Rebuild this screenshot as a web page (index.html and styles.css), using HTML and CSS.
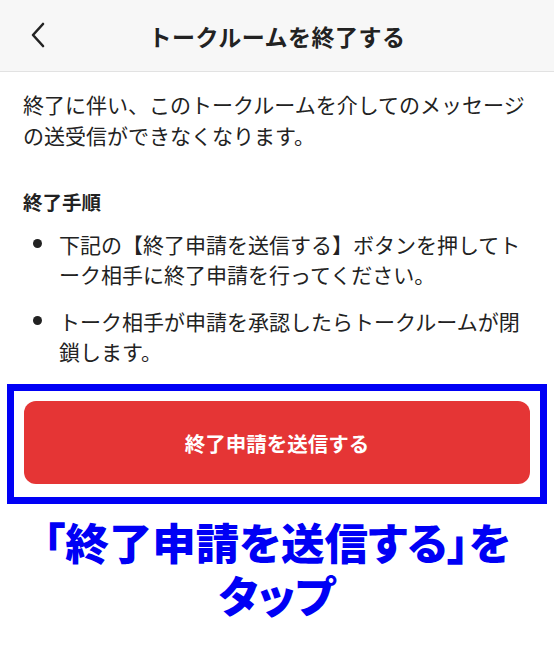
FILE: index.html
```html
<!DOCTYPE html>
<html lang="ja">
<head>
  <meta charset="UTF-8">
  <meta name="viewport" content="width=device-width, initial-scale=1">
  <title>トークルームを終了する</title>
  <link rel="stylesheet" href="styles.css">
</head>
<body>

  <header class="topbar">
    <button class="back" aria-label="戻る">
      <svg width="16" height="26" viewBox="0 0 16 26">
        <polyline points="13,2 3,13 13,24" fill="none" stroke="#222" stroke-width="2.6" stroke-linecap="round" stroke-linejoin="round"/>
      </svg>
    </button>
    <h1 class="title">トークルームを終了する</h1>
  </header>

  <main class="content">
    <p class="lead">終了に伴い、このトークルームを介してのメッセージの送受信ができなくなります。</p>

    <h2 class="steps-title">終了手順</h2>
    <ul class="steps">
      <li>下記の【終了申請を送信する】ボタンを押してトーク相手に終了申請を行ってください。</li>
      <li>トーク相手が申請を承認したらトークルームが閉鎖します。</li>
    </ul>
  </main>

  <div class="highlight">
    <button class="submit">終了申請を送信する</button>
  </div>

  <p class="caption">
    <span class="caption-line">「終了申請を送信する」を</span>
    <span class="caption-line">タップ</span>
  </p>

</body>
</html>
```

FILE: styles.css
```css
body {
  margin: 0;
  padding: 0;
  background-color: #fff;
  font-family: "Noto Sans CJK JP", "Noto Sans", sans-serif;
  color: #222;
  line-break: loose;
}

.topbar {
  height: 71px;
  background-color: #f7f7f7;
  border-bottom: 1px solid #e2e2e2;
  display: flex;
  align-items: center;
  justify-content: center;
  position: relative;
}

.back {
  position: absolute;
  left: 30px;
  top: 22px;
  padding: 0;
  border: none;
  background: none;
  line-height: 0;
}

.title {
  margin: 0;
  font-size: 23px;
  font-weight: 700;
  letter-spacing: 0.5px;
}

.content {
  padding: 0 20px 0 23px;
}

.lead {
  margin: 17px 0 0;
  font-size: 21px;
  line-height: 31px;
}

.steps-title {
  margin: 35px 0 0;
  font-size: 19.5px;
  font-weight: 700;
  line-height: 31px;
}

.steps {
  list-style: none;
  margin: 12px 0 0;
  padding: 0 0 0 36px;
}

.steps li {
  position: relative;
  font-size: 21px;
  line-height: 30px;
}

.steps li + li {
  margin-top: 17px;
}

.steps li:before {
  content: "";
  position: absolute;
  left: -26px;
  top: 10px;
  width: 9px;
  height: 9px;
  border-radius: 50%;
  background-color: #222;
}

.highlight {
  margin: 18px 7px 0;
  border: 7px solid #0000f5;
  padding: 10px 10px 13px;
}

.submit {
  display: block;
  width: 100%;
  height: 83px;
  border: none;
  border-radius: 12px;
  background-color: #e53535;
  color: #fff;
  font-family: inherit;
  font-size: 20.5px;
  font-weight: 700;
}

.caption {
  margin: 11px 0 0;
  text-align: center;
  color: #0000f5;
  font-size: 43.5px;
  font-weight: 900;
  line-height: 53px;
  font-feature-settings: "palt";
}

.caption-line {
  display: block;
  height: 53px;
  overflow: visible;
}
```
